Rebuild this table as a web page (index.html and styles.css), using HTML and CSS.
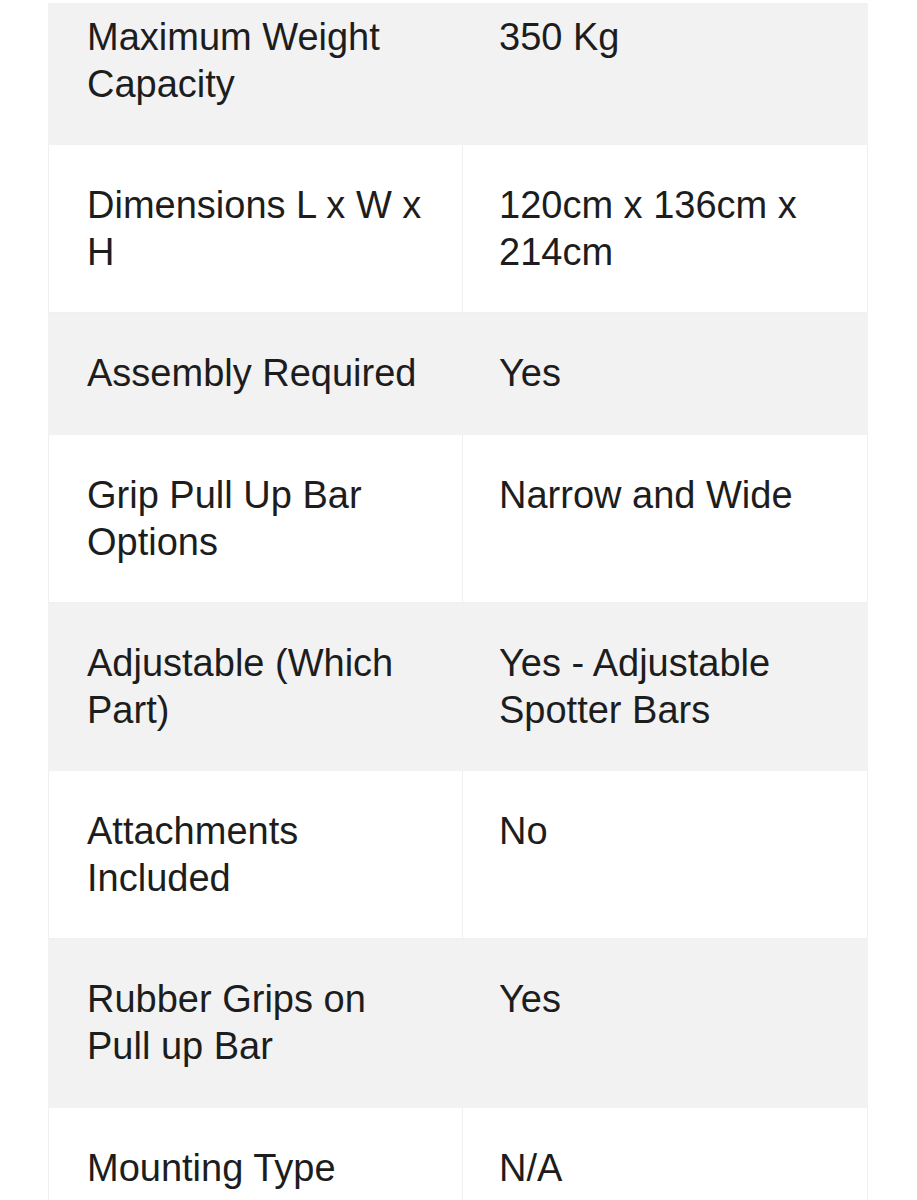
FILE: index.html
```html
<!DOCTYPE html>
<html lang="en">
<head>
<meta charset="utf-8">
<title>Specifications</title>
<link rel="stylesheet" href="styles.css">
</head>
<body>
<div class="viewport">
  <table class="specs">
    <tbody>
      <tr class="odd"><td class="key">Maximum Weight Capacity</td><td class="val">350 Kg</td></tr>
      <tr class="even"><td class="key">Dimensions L x W x H</td><td class="val">120cm x 136cm x 214cm</td></tr>
      <tr class="odd"><td class="key">Assembly Required</td><td class="val">Yes</td></tr>
      <tr class="even"><td class="key">Grip Pull Up Bar Options</td><td class="val">Narrow and Wide</td></tr>
      <tr class="odd"><td class="key">Adjustable (Which Part)</td><td class="val">Yes - Adjustable Spotter Bars</td></tr>
      <tr class="even"><td class="key">Attachments Included</td><td class="val">No</td></tr>
      <tr class="odd"><td class="key">Rubber Grips on Pull up Bar</td><td class="val">Yes</td></tr>
      <tr class="even"><td class="key">Mounting Type</td><td class="val">N/A</td></tr>
    </tbody>
  </table>
</div>
</body>
</html>
```

FILE: styles.css
```css
html, body {
  margin: 0;
  padding: 0;
  background: #ffffff;
}

body {
  font-family: "Liberation Sans", Arial, Helvetica, sans-serif;
  color: #1d1d1d;
}

.viewport {
  margin-top: 3px;
  height: 1197px;
  overflow: hidden;
}

.specs {
  margin: -27px 0 0 48px;
  width: 820px;
  border-collapse: collapse;
  table-layout: fixed;
}

.specs td {
  vertical-align: top;
  padding: 37px 36px 36.6px 38px;
  font-size: 38px;
  line-height: 46.8px;
  border: 1px solid #f0f0f0;
}

.specs td.key {
  width: 414px;
  box-sizing: border-box;
}

.specs td.val {
  padding-left: 36px;
}

.specs tr.odd td {
  background: #f2f2f2;
  border-color: #f2f2f2;
}

.specs tr.even td {
  background: #ffffff;
}
```
